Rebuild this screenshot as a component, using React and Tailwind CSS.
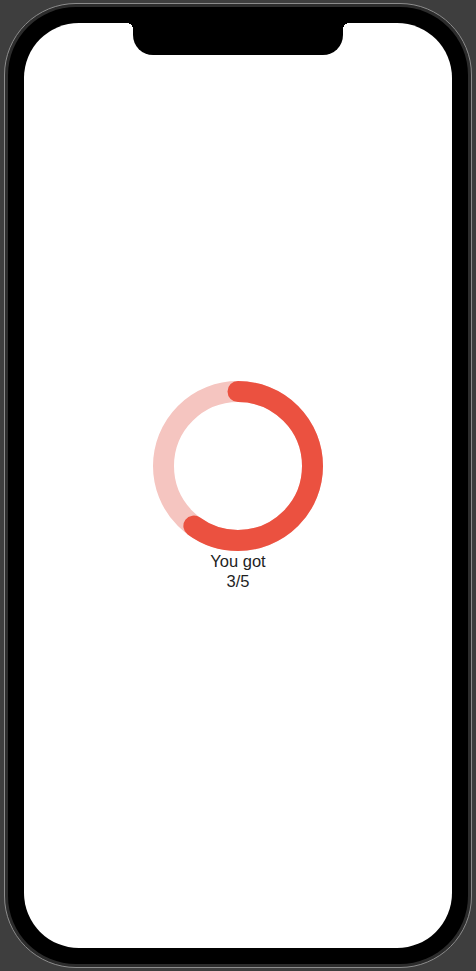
import React from 'react';

function ScoreRing({ score, total }) {
  const size = 170;
  const stroke = 21;
  const r = (size - stroke) / 2;
  const c = 2 * Math.PI * r;
  const pct = score / total;

  return (
    <svg width={size} height={size} viewBox={`0 0 ${size} ${size}`} className="-rotate-90">
      <circle cx={size / 2} cy={size / 2} r={r} fill="none" stroke="#f5c5c0" strokeWidth={stroke} />
      <circle
        cx={size / 2}
        cy={size / 2}
        r={r}
        fill="none"
        stroke="#eb5140"
        strokeWidth={stroke}
        strokeLinecap="round"
        strokeDasharray={`${c * pct} ${c}`}
      />
    </svg>
  );
}

export default function App() {
  return (
    <div className="h-[971px] w-[476px] bg-[#3e3e3e] px-[4px] pt-[3px] pb-[3px]">
      {/* phone body */}
      <div className="h-full rounded-[72px] border border-[#8c8c8c] bg-[#2c2c2c] p-[3px]">
        <div className="h-full rounded-[68px] bg-black px-[16px] pt-[16px] pb-[16px]">
          {/* screen */}
          <div className="relative flex h-full flex-col items-center justify-center overflow-hidden rounded-[55px] bg-white">
            {/* notch */}
            <div className="absolute top-0 left-1/2 h-[32px] w-[210px] -translate-x-1/2 rounded-b-[20px] bg-black" />
            <div className="absolute top-0 left-[103px] h-[6px] w-[6px] bg-[radial-gradient(circle_at_0_100%,transparent_6px,black_6px)]" />
            <div className="absolute top-0 right-[103px] h-[6px] w-[6px] bg-[radial-gradient(circle_at_100%_100%,transparent_6px,black_6px)]" />

            <ScoreRing score={3} total={5} />
            <div className="text-center font-['Liberation_Sans',Arial,sans-serif] text-[16.5px] leading-[20px] text-[#1f1f1f]">
              <p>You got</p>
              <p>3/5</p>
            </div>
          </div>
        </div>
      </div>
    </div>
  );
}
